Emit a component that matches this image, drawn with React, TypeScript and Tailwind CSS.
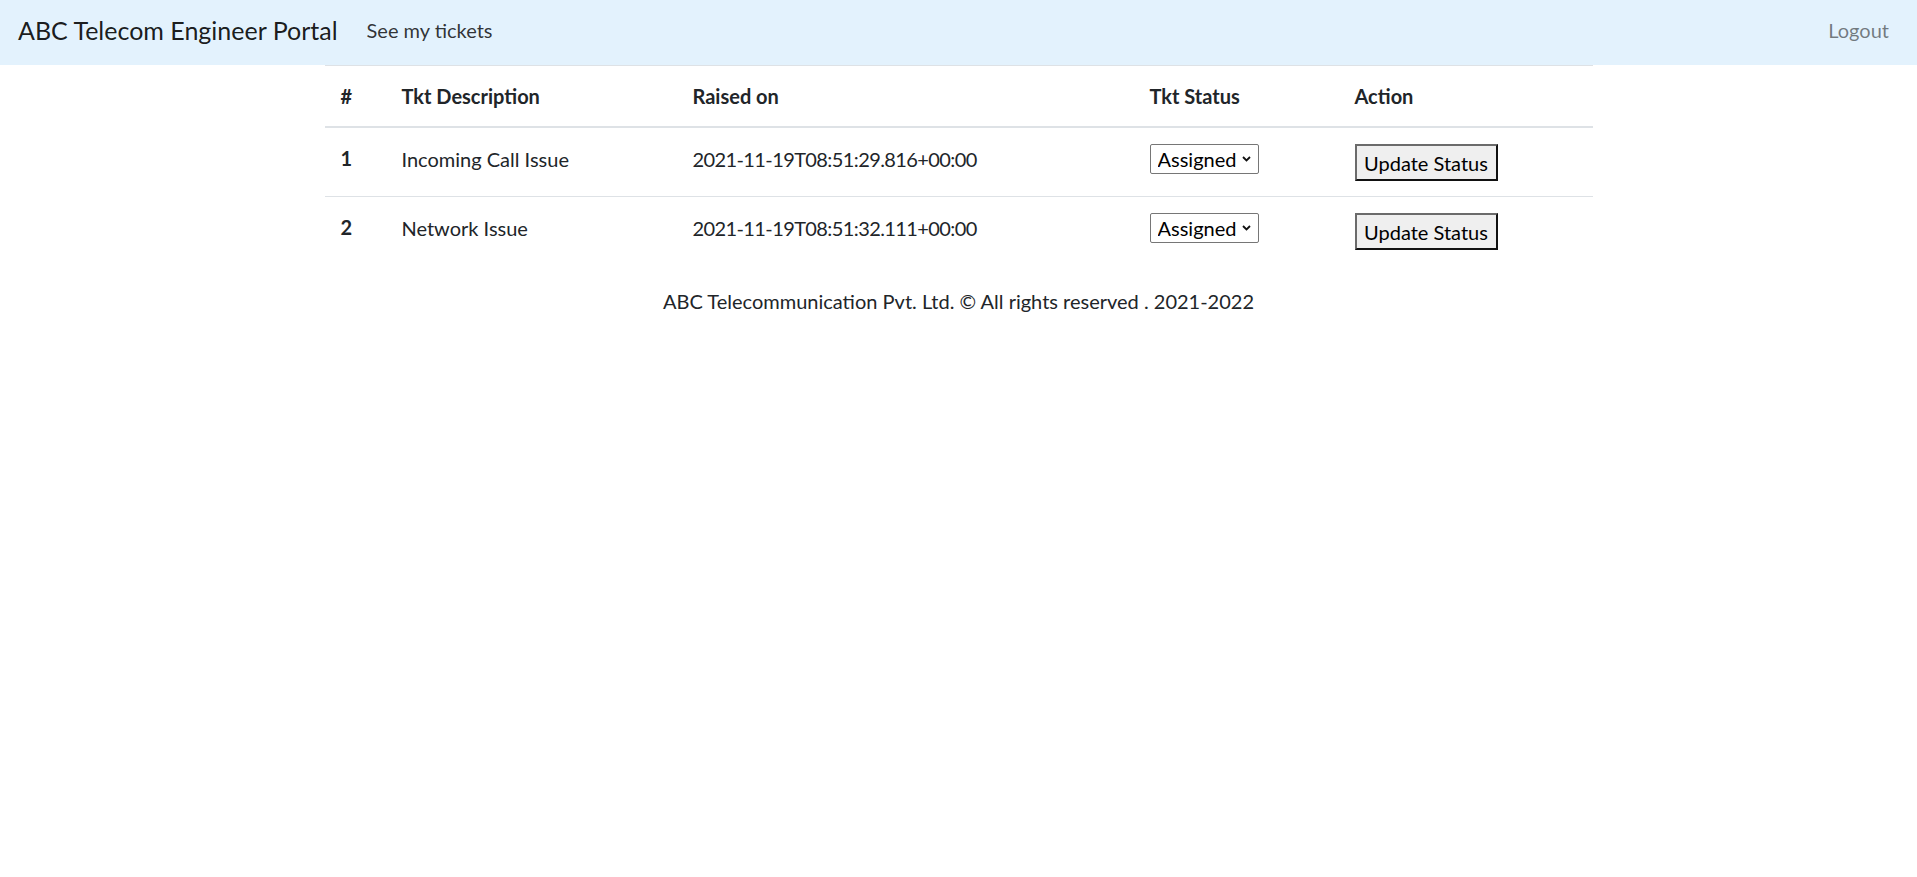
import React from "react";

const rows = [
  { id: 1, desc: "Incoming Call Issue", raised: "2021-11-19T08:51:29.816+00:00" },
  { id: 2, desc: "Network Issue", raised: "2021-11-19T08:51:32.111+00:00" },
];

function StatusSelect() {
  return (
    <div className="relative mt-px inline-block h-[30px] w-[109px]">
      <select
        defaultValue="Assigned"
        className="h-[30px] w-[109px] appearance-none rounded-[2px] border border-[#767676] bg-white pl-[7px] pr-[12px] text-[20px] leading-[28px] text-black outline-none"
      >
        <option>Open</option>
        <option>Assigned</option>
        <option>In Progress</option>
        <option>Resolved</option>
      </select>
      <svg
        className="pointer-events-none absolute right-[8px] top-[12px]"
        width="9"
        height="6"
        viewBox="0 0 9 6"
      >
        <path d="M1 1 L4.5 4.5 L8 1" fill="none" stroke="#111" strokeWidth="1.8" />
      </svg>
    </div>
  );
}

function UpdateButton() {
  return (
    <button
      type="button"
      className="mt-px h-[37px] w-[143px] border-2 border-t-[#6b6b6b] border-l-[#6b6b6b] border-r-[#111] border-b-[#111] bg-[#efefef] text-center text-[20px] leading-[30px] text-black"
    >
      Update Status
    </button>
  );
}

export default function App() {
  return (
    <div className="min-h-screen bg-white font-['Lato',sans-serif] text-[20px] leading-[30px] text-[#212529]">
      <nav className="flex h-[65px] items-center bg-[#e3f2fd] px-[18px] pb-[5px]">
        <a className="mr-[29px] text-[25px] leading-[37px] text-black/90" href="#">
          ABC Telecom Engineer Portal
        </a>
        <a className="text-[20px] text-black/80" href="#">
          See my tickets
        </a>
        <a className="ml-auto pr-[10px] text-[20px] text-black/50" href="#">
          Logout
        </a>
      </nav>

      <main className="mx-auto w-[1268px]">
        <table className="w-full table-fixed border-collapse text-left">
          <colgroup>
            <col className="w-[62px]" />
            <col className="w-[291px]" />
            <col className="w-[457px]" />
            <col className="w-[205px]" />
            <col className="w-[253px]" />
          </colgroup>
          <thead>
            <tr className="border-t border-[#dee2e6]">
              <th className="border-b-2 border-[#dee2e6] p-[15px] pl-[16px] align-bottom font-bold">#</th>
              <th className="border-b-2 border-[#dee2e6] p-[15px] align-bottom font-bold">Tkt Description</th>
              <th className="border-b-2 border-[#dee2e6] p-[15px] align-bottom font-bold">Raised on</th>
              <th className="border-b-2 border-[#dee2e6] p-[15px] align-bottom font-bold">Tkt Status</th>
              <th className="border-b-2 border-[#dee2e6] p-[15px] align-bottom font-bold">Action</th>
            </tr>
          </thead>
          <tbody>
            {rows.map((r, i) => (
              <tr key={r.id} className={i > 0 ? "border-t border-[#dee2e6]" : ""}>
                <th className="p-[15px] pl-[16px] align-top font-bold">{r.id}</th>
                <td className="p-[15px] pt-[16px] align-top">{r.desc}</td>
                <td className="p-[15px] pt-[16px] align-top tracking-[-0.6px]">{r.raised}</td>
                <td className="p-[15px] align-top">
                  <StatusSelect />
                </td>
                <td className="p-[15px] align-top">
                  <UpdateButton />
                </td>
              </tr>
            ))}
          </tbody>
        </table>

        <p className="mt-[21px] text-center">
          ABC Telecommunication Pvt. Ltd. © All rights reserved . 2021-2022
        </p>
      </main>
    </div>
  );
}
